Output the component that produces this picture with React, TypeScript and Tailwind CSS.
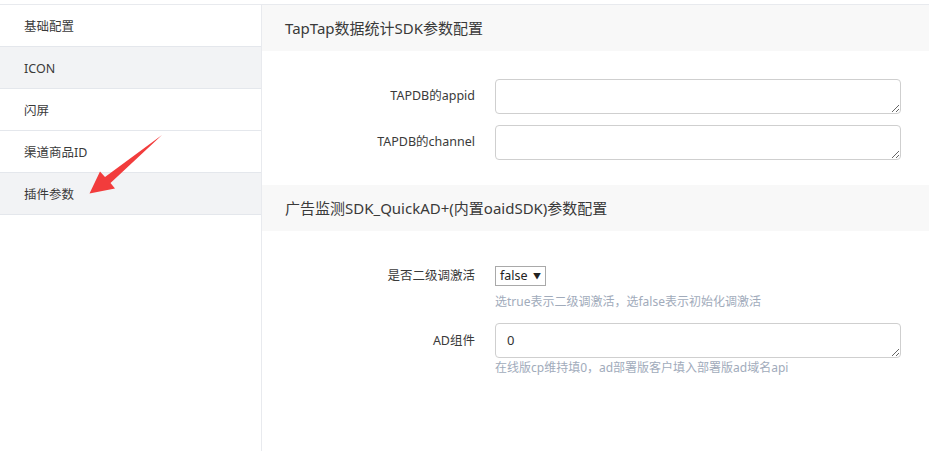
import React from "react";

const menu = [
    { label: "基础配置", active: false },
    { label: "ICON", active: true },
    { label: "闪屏", active: false },
    { label: "渠道商品ID", active: false },
    { label: "插件参数", active: true },
];

function SectionHeader({ title }: { title: string }) {
    return (
        <div className="h-[46px] bg-[#f8f8f8] flex items-center pl-[23px] text-[15px] text-[#3a3a3a]">
            {title}
        </div>
    );
}

function FieldLabel({ text }: { text: string }) {
    return <div className="w-[213px] shrink-0 text-right text-[12.5px] text-[#3a3a3a]">{text}</div>;
}

export default function App() {
    return (
        <div
            className="relative w-[929px] h-[451px] bg-white overflow-hidden pt-[4px]"
            style={{ fontFamily: '"Noto Sans", "Noto Sans CJK SC", sans-serif' }}
        >
            <div className="flex h-full border-t border-[#e8eaee]">
                {/* SIDEBAR */}
                <div className="w-[262px] shrink-0 border-r border-[#e8eaee] h-full">
                    {menu.map((item) => (
                        <div
                            key={item.label}
                            className={`h-[42px] flex items-center pl-[24px] pt-[3px] border-b border-[#e4e7ec] text-[12.5px] text-[#3a3a3a] ${item.active ? "bg-[#f2f3f5]" : "bg-white"}`}
                        >
                            {item.label}
                        </div>
                    ))}
                </div>

                {/* CONTENT */}
                <div className="flex-1">
                    <SectionHeader title="TapTap数据统计SDK参数配置" />

                    <div className="pt-[28px] pb-[25px] flex flex-col gap-[11px]">
                        <div className="flex items-center gap-[20px]">
                            <FieldLabel text="TAPDB的appid" />
                            <textarea className="w-[406px] h-[35px] border border-[#cfcfcf] rounded-[4px] outline-none" />
                        </div>
                        <div className="flex items-center gap-[20px]">
                            <FieldLabel text="TAPDB的channel" />
                            <textarea className="w-[406px] h-[35px] border border-[#cfcfcf] rounded-[4px] outline-none" />
                        </div>
                    </div>

                    <SectionHeader title="广告监测SDK_QuickAD+(内置oaidSDK)参数配置" />

                    <div className="pt-[35px]">
                        <div className="flex items-start gap-[20px]">
                            <div className="w-[213px] shrink-0 text-right text-[12.5px] text-[#3a3a3a] leading-[20px]">是否二级调激活</div>
                            <div className="flex flex-col">
                                <div className="w-[51px] h-[20px] border border-[#a9a9a9] flex items-center justify-between px-[4px] text-[12.5px] text-[#222]">
                                    <span>false</span>
                                    <span className="text-[8px] text-[#222]">▼</span>
                                </div>
                                <div className="mt-[7px] text-[12px] text-[#a1abbb] leading-[18px]">
                                    选true表示二级调激活，选false表示初始化调激活
                                </div>
                            </div>
                        </div>

                        <div className="flex items-start gap-[20px] mt-[12px]">
                            <div className="w-[213px] shrink-0 text-right text-[12.5px] text-[#3a3a3a] leading-[35px]">AD组件</div>
                            <div className="flex flex-col">
                                <textarea
                                    defaultValue="0"
                                    className="w-[406px] h-[35px] border border-[#cfcfcf] rounded-[4px] outline-none px-[11px] py-[6px] text-[13px] text-[#333] leading-[20px]"
                                />
                                <div className="mt-[1px] text-[12px] text-[#a1abbb] leading-[18px]">
                                    在线版cp维持填0，ad部署版客户填入部署版ad域名api
                                </div>
                            </div>
                        </div>
                    </div>
                </div>
            </div>

            {/* annotation arrow */}
            <svg className="absolute left-0 top-0 pointer-events-none" width="929" height="451" viewBox="0 0 929 451">
                <polygon
                    points="162,135 110.5,183 115,188.5 89.5,193.5 100,171.5 105,177 162,135"
                    fill="#f23c3c"
                />
            </svg>
        </div>
    );
}
